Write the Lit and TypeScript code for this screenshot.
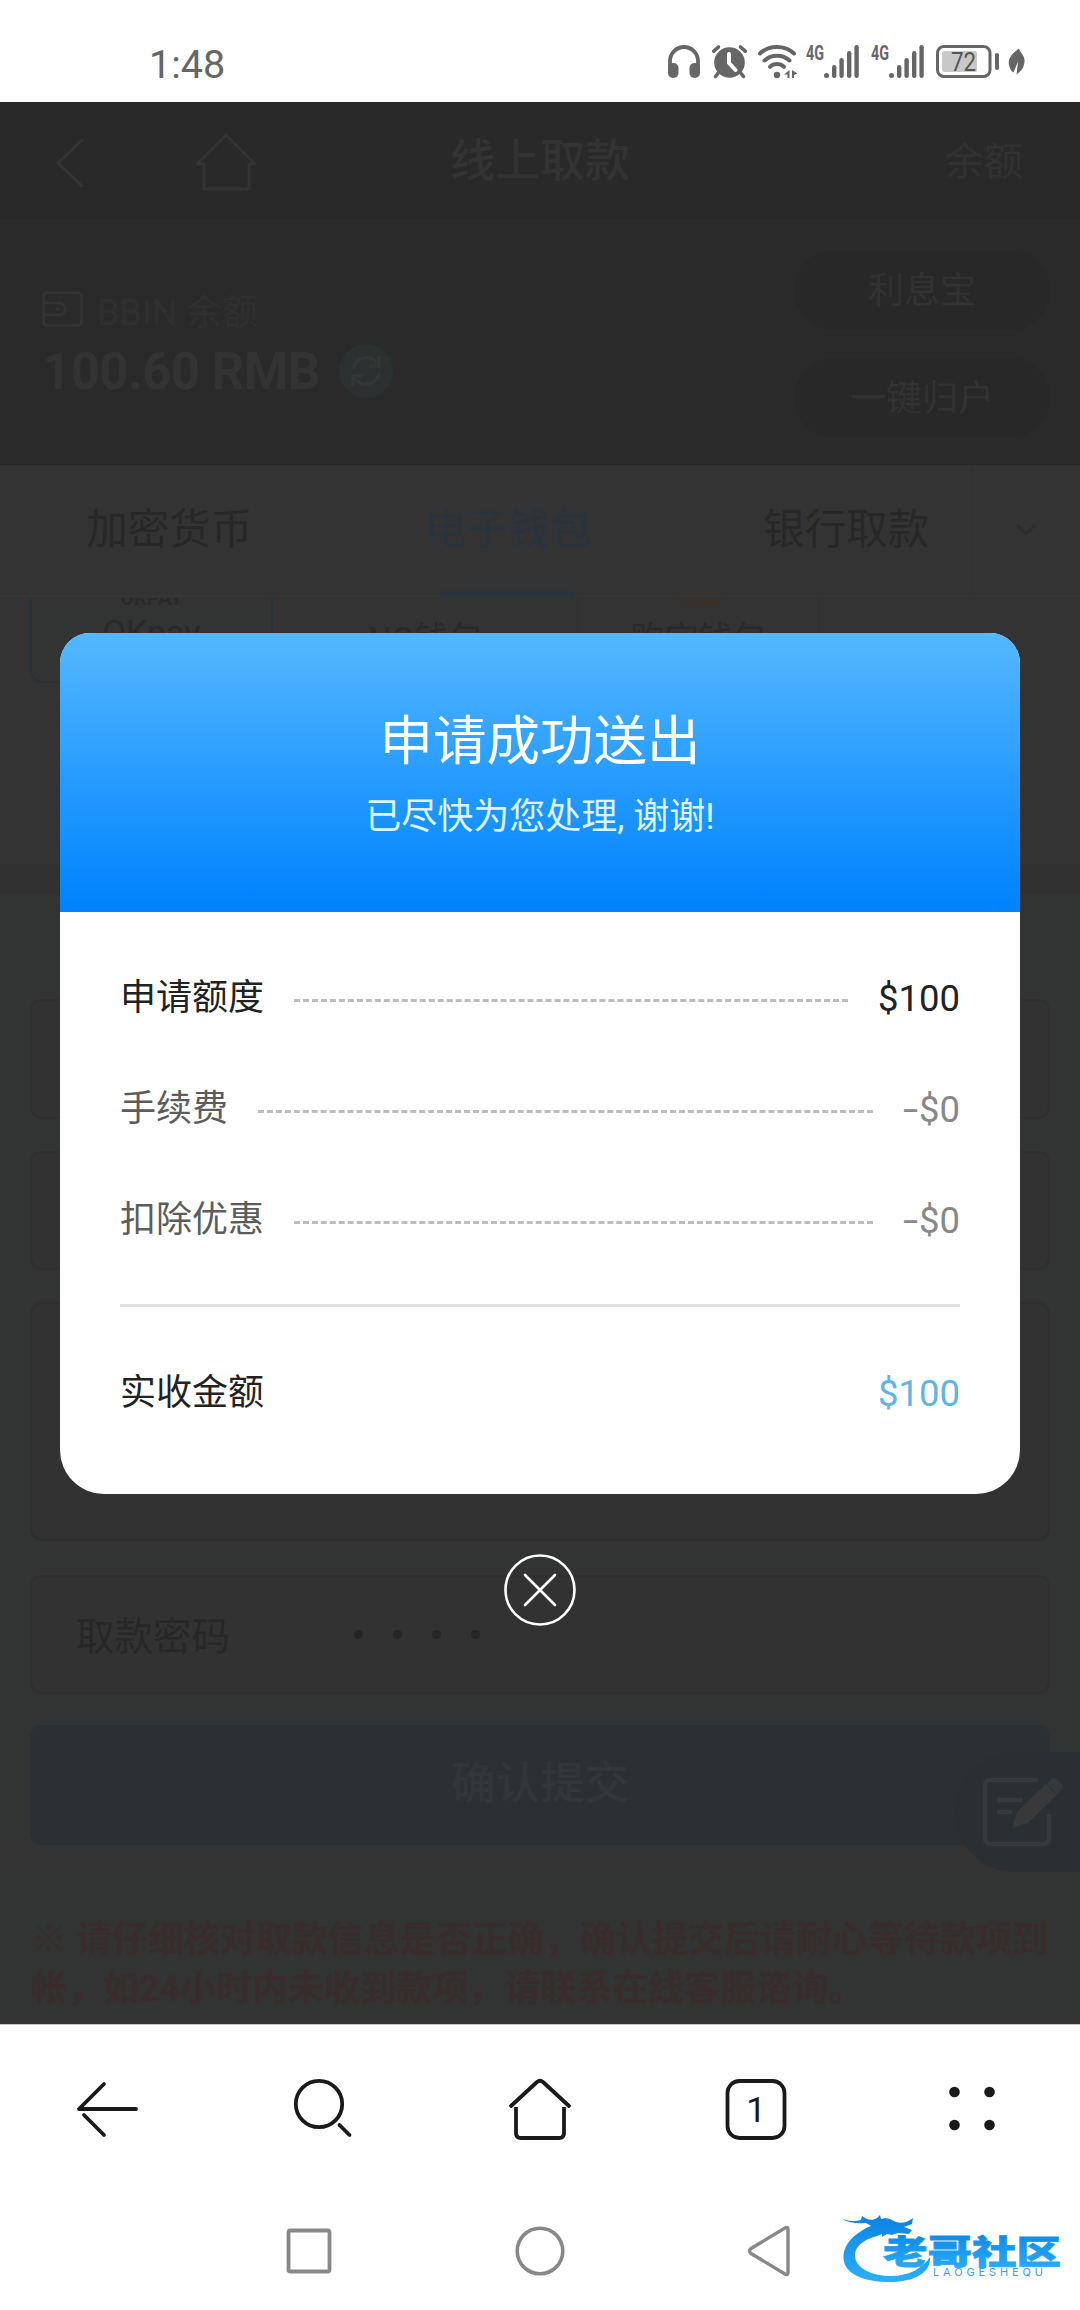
import { LitElement, html, css, svg } from "lit";
import { customElement } from "lit/decorators.js";

const FONT = css`Roboto, "Noto Sans CJK SC", sans-serif`;

interface Row {
  label: string;
  value: string;
  negative: boolean;
}

@customElement("status-bar")
class StatusBar extends LitElement {
  static styles = css`
    :host { display: flex; height: 102px; background: #fff; font-family: ${FONT}; color: #666; box-sizing: border-box; padding: 0 55px 0 149px; justify-content: space-between; }
    .time { font-size: 39.5px; line-height: 129px; }
    .icons { display: flex; height: 34px; margin-top: 45px; }
    .icons svg { display: block; flex: none; overflow: visible; }
    .phones { margin-right: 12px; }
    .alarm { margin-right: 11px; }
    .wifi { margin-right: 8px; }
    .signal { margin-right: 12px; }
    .net { font: 700 20px "Roboto"; fill: #666; }
    .pct { font: 400 25px "Roboto"; fill: #555; }
  `;

  signal() {
    return html`<svg class="signal" width="53" height="34" viewBox="0 0 53 34" fill="#666">
      <text class="net" x="0" y="15" textLength="18" lengthAdjust="spacingAndGlyphs">4G</text>
      <circle cx="20.5" cy="30.6" r="2.5" />
      ${[[26, 20], [33.4, 13], [41, 6], [48.4, 0]].map(
        ([x, y]) => svg`<rect x=${x} y=${y} width="4.4" height=${33 - y} rx="2.2" />`
      )}
    </svg>`;
  }

  render() {
    return html`
      <div class="time">1:48</div>
      <div class="icons">
        <svg class="phones" width="32" height="34" viewBox="0 0 32 34">
          <path d="M2 25V16a14 14 0 0 1 28 0v9" fill="none" stroke="#666" stroke-width="3.8" />
          <rect x="0" y="18" width="10.5" height="15" rx="5" fill="#666" />
          <rect x="21.5" y="18" width="10.5" height="15" rx="5" fill="#666" />
        </svg>
        <svg class="alarm" width="35" height="34" viewBox="0 0 35 34">
          <circle cx="17.5" cy="17.5" r="15.3" fill="#666" />
          <path d="M1.8 6.2 6.5 2M33.2 6.2 28.5 2M7 27l-3.5 4.5M28 27l3.5 4.5" stroke="#666" stroke-width="3.6" stroke-linecap="round" />
          <path d="M17 9v9l6.5 7" fill="none" stroke="#fff" stroke-width="4" stroke-linecap="round" stroke-linejoin="round" />
        </svg>
        <svg class="wifi" width="40" height="34" viewBox="0 0 40 34">
          <g fill="none" stroke="#666" stroke-width="4" stroke-linecap="round">
            <path d="M2 8.5C11-.2 27-.2 36 8.5" />
            <path d="M6.5 15.5c7-6.5 18-6.500 25 0" />
            <path d="M12 21.8c4-3.6 10-3.600 14 0" />
          </g>
          <circle cx="19" cy="30" r="3.2" fill="#666" />
          <path d="M31.500 25v8h-2v-3.500H26zM34 33v-8l5.500 3.500L36 30v3z" fill="#666" />
        </svg>
        ${this.signal()}${this.signal()}
        <svg width="89" height="34" viewBox="0 0 89 34">
          <rect x="1.5" y="1.5" width="52.5" height="30" rx="6.5" fill="none" stroke="#666" stroke-width="3" />
          <rect x="6" y="6" width="35" height="21" rx="2.5" fill="#c8c8c8" />
          <text class="pct" x="15" y="26" textLength="25" lengthAdjust="spacingAndGlyphs">72</text>
          <rect x="59" y="8" width="4" height="17" rx="2" fill="#666" />
          <path d="M83 3.500c1 4 6 7 5.500 13-.5 7-4 10-8 13l1.500-13-4.500 11-2-1.500C69 16 75 9 83 3.500z" fill="#666" />
        </svg>
      </div>
    `;
  }
}

@customElement("withdraw-page")
class WithdrawPage extends LitElement {
  static styles = css`
    :host { display: flex; flex-direction: column; height: 1922px; position: relative; overflow: hidden; background: #333; font-family: ${FONT}; color: #272727; }
    svg { display: block; flex: none; }
    .head { display: grid; grid-template-columns: 450px 1fr auto; height: 120px; box-sizing: border-box; background: #292929; color: #333; padding-right: 57px; border-bottom: 2px solid #2c2c2c; line-height: 120px; white-space: nowrap; }
    .left { display: flex; padding: 30px 0 0 55px; gap: 110px; }
    .title { font-size: 45px; font-weight: 500; }
    .link { font-size: 39px; color: #313131; }
    .balance { display: flex; justify-content: space-between; height: 243px; box-sizing: border-box; background: #2a2a2a; color: #333; padding: 28px 30px 0 42px; }
    .sum { display: flex; flex-direction: column; padding-top: 34px; }
    .bbin { display: flex; align-items: center; gap: 14px; height: 50px; font-size: 36px; color: #2f2f2f; }
    .amount { display: flex; align-items: center; gap: 19px; height: 60px; margin-top: 7px; font-size: 51px; letter-spacing: -0.6px; font-weight: 700; }
    .pills { display: flex; flex-direction: column; gap: 28px; }
    .pill { width: 256px; height: 80px; line-height: 82px; border-radius: 40px; background: #282828; text-align: center; font-size: 36px; color: #323232; }
    .tabs { display: flex; height: 132px; flex: none; font-size: 41.5px; line-height: 130px; border-bottom: 2px solid #353535; box-sizing: border-box; }
    .tab { flex: 0 0 338.5px; display: flex; flex-direction: column; align-items: center; height: 132px; }
    .tab.active { color: #29333e; }
    .tab.active::after { content: ""; width: 135px; height: 7px; margin-top: -4px; background: #2a333b; }
    .more { flex: 1; display: flex; justify-content: center; align-items: center; margin-left: -44px; border-left: 1px solid #313131; }
    .wallets { display: flex; height: 88px; padding-left: 30px; flex: none; margin-top: 1px; font-size: 34px; color: #292929; }
    .wallet { box-sizing: border-box; width: 243px; border: 2px solid #313131; border-top: 0; border-radius: 0 0 12px 12px; display: flex; flex-direction: column; align-items: center; height: 85px; overflow: hidden; }
    .wallet:nth-child(2) { width: 306px; border-left: 0; }
    .wallet:nth-child(3) { width: 241px; border-left: 0; }
    .wallet.on { border-color: #293238; background: #323333; }
    .brand { height: 14px; line-height: 0; font-size: 20px; font-weight: 700; }
    .coin { width: 46px; height: 9px; margin-bottom: 5px; border-radius: 0 0 24px 24px; background: #38302b; }
    .band { height: 30px; margin-top: 178px; flex: none; background: #313131; }
    .form { display: flex; flex-direction: column; padding: 105px 30px 0; flex: none; background: #323333; }
    .box { box-sizing: border-box; border: 2px solid #2f2f2f; border-radius: 12px; height: 119px; background: #323232; font-size: 38.5px; line-height: 119px; padding: 0 44px; display: flex; }
    .box.note { height: 120px; margin-bottom: 32px; }
    .box.tall { height: 239px; margin: 32px 0 34px; padding-top: 114px; font-size: 35px; color: #2c2c2c; }
    .blue { color: #29323a; }
    .dots { display: flex; gap: 30px; padding: 53px 0 0 124px; }
    .dot { width: 9px; height: 9px; border-radius: 50%; background: #252525; }
    .submit { height: 120px; line-height: 119px; margin-top: 31px; border-radius: 12px; background: #2b3034; color: #333639; font-size: 44.5px; text-align: center; font-weight: 500; }
    .warn { flex: 1; background: #313432; margin-top: 27px; padding: 44px 0 0 31px; font-size: 36px; line-height: 49px; font-weight: 700; color: #382c2c; white-space: nowrap; }
    .fab { position: absolute; right: 0; bottom: 152px; width: 125px; height: 120px; background: #2a2f33; border-radius: 60px 0 0 60px; }
    .fab svg { margin: 22px 0 0 27px; }
  `;

  render() {
    return html`
      <div class="head">
        <div class="left">
          <svg width="31" height="60" viewBox="0 0 31 60"><path d="M28 7 3 31l25 24" fill="none" stroke="#343434" stroke-width="3" /></svg>
          <svg width="60" height="60" viewBox="0 0 60 60"><path d="M1 32 30 3l29 29H53V57H8V32z" fill="none" stroke="#333" stroke-width="3" /></svg>
        </div>
        <div class="title">线上取款</div>
        <div class="link">余额</div>
      </div>
      <div class="balance">
        <div class="sum">
          <div class="bbin">
            <svg width="41" height="36" viewBox="0 0 41 36">
              <rect x="1.5" y="1.5" width="38" height="33" rx="4" fill="none" stroke="#343434" stroke-width="2.6" />
              <path d="M2 12h15a6 6 0 0 1 0 12H2" fill="none" stroke="#343434" stroke-width="2.6" />
              <circle cx="15" cy="18" r="1.8" fill="#343434" />
            </svg>
            <span>BBIN 余额</span>
          </div>
          <div class="amount">
            <span>100.60 RMB</span>
            <svg width="54" height="54" viewBox="0 0 54 54">
              <circle cx="27" cy="27" r="27" fill="#2c3030" />
              <g fill="none" stroke="#343636" stroke-width="3.5">
                <path d="M14 25a13.500 13.500 0 0 1 24-6M40 29a13.500 13.500 0 0 1-24 6" />
                <path d="M40 12v10H30M14 42V32h10" />
              </g>
            </svg>
          </div>
        </div>
        <div class="pills">
          <div class="pill">利息宝</div>
          <div class="pill">一键归户</div>
        </div>
      </div>
      <div class="tabs">
        <div class="tab">加密货币</div>
        <div class="tab active">电子钱包</div>
        <div class="tab">银行取款</div>
        <div class="more"><svg width="20" height="12" viewBox="0 0 20 12"><path d="M1 1l9 9 9-9" fill="none" stroke="#2d2d2d" stroke-width="2.5" /></svg></div>
      </div>
      <div class="wallets">
        <div class="wallet on"><div class="brand">OKPAY</div>OKpay</div>
        <div class="wallet"><div class="brand"></div>NG钱包</div>
        <div class="wallet"><div class="coin"></div>购宝钱包</div>
      </div>
      <div class="band"></div>
      <div class="form">
        <div class="box note"></div>
        <div class="box"></div>
        <div class="box tall"><span class="blue">什么</span><span>是信用账户</span></div>
        <div class="box">
          <span>取款密码</span>
          <div class="dots">${[0, 1, 2, 3].map(() => html`<span class="dot"></span>`)}</div>
        </div>
        <div class="submit">确认提交</div>
      </div>
      <div class="warn">※ 请仔细核对取款信息是否正确，确认提交后请耐心等待款项到<br />帐，如24小时内未收到款项，请联系在线客服谘询。</div>
      <div class="fab">
        <svg width="82" height="76" viewBox="0 0 82 76">
          <path d="M56 6H8a5 5 0 0 0-5 5v54a5 5 0 0 0 5 5h54a5 5 0 0 0 5-5V40" fill="none" stroke="#373a3c" stroke-width="4.5" />
          <path d="M15 26h26M15 38h15" stroke="#373a3c" stroke-width="4.5" />
          <path d="M30 54l5-16 30-29 11 11-30 29z" fill="#393939" />
          <path d="M64 10l5-5q3-3 6 0l5 5q3 3 0 6l-5 5z" fill="#34383a" stroke="#2a2f33" />
        </svg>
      </div>
    `;
  }
}

@customElement("result-dialog")
class ResultDialog extends LitElement {
  static styles = css`
    :host { display: flex; flex-direction: column; align-items: center; width: 960px; font-family: ${FONT}; }
    .card { width: 960px; height: 861px; border-radius: 30px 30px 44px 44px; overflow: hidden; background: #fff; }
    .top { height: 279px; box-sizing: border-box; padding-top: 69px; text-align: center; background: linear-gradient(#54b8ff, #0083ff 97%); }
    .title { font-size: 53.5px; line-height: 80px; font-weight: 400; color: #fff; }
    .sub { font-size: 36px; line-height: 54px; margin-top: 8px; color: #dcf3ff; }
    .body { padding: 31px 60px 0; font-size: 36px; }
    .row { display: flex; align-items: center; height: 111px; line-height: 111px; color: #222; white-space: nowrap; }
    .dash { flex: 1; height: 0; border-top: 3px dashed #bcbcbc; margin: 3px 30px 0; }
    .val { font-size: 36.5px; }
    .minus { display: inline-block; width: 16px; transform: scaleX(1.5); transform-origin: left; }
    .muted { color: #5c5c5c; }
    .muted .val { color: #888; }
    .rule { height: 3px; background: #dfdfdf; margin: 28px 0 31px; }
    .total { justify-content: space-between; }
    .blue { color: #5fb4e8; }
    .close { display: block; margin-top: 60px; }
  `;

  rows: Row[] = [
    { label: "申请额度", value: "$100", negative: false },
    { label: "手续费", value: "$0", negative: true },
    { label: "扣除优惠", value: "$0", negative: true },
  ];

  render() {
    return html`
      <div class="card">
        <div class="top">
          <div class="title">申请成功送出</div>
          <div class="sub">已尽快为您处理, 谢谢!</div>
        </div>
        <div class="body">
          ${this.rows.map(
            (r) => html`<div class="row ${r.negative ? "muted" : ""}"><span>${r.label}</span><i class="dash"></i><span class="val">${r.negative ? html`<span class="minus">-</span>` : ""}${r.value}</span></div>`
          )}
          <div class="rule"></div>
          <div class="row total"><span>实收金额</span><span class="val blue">$100</span></div>
        </div>
      </div>
      <svg class="close" width="72" height="72" viewBox="0 0 72 72" fill="none" stroke="#fff" stroke-width="2.6">
        <circle cx="36" cy="36" r="34.5" />
        <path d="M21 21l30 30M51 21 21 51" stroke-linecap="round" />
      </svg>
    `;
  }
}

@customElement("browser-bar")
class BrowserBar extends LitElement {
  static styles = css`
    :host { display: grid; grid-template-columns: repeat(5, 216px); height: 172px; box-sizing: border-box; border-top: 1px solid #c4c4c4; background: #fff; justify-items: center; align-items: center; padding-bottom: 3px; }
    svg { display: block; }
    .n { font: 400 35px "Roboto"; fill: #1a1a1a; }
  `;

  render() {
    return html`
      <svg width="64" height="64" viewBox="0 0 64 64" fill="none" stroke="#1a1a1a" stroke-width="3.8" stroke-linecap="round" stroke-linejoin="round"><path d="M60 32H3L28 7M8 38l20 20" /></svg>
      <svg width="64" height="64" viewBox="0 0 64 64" fill="none" stroke="#1a1a1a" stroke-width="3.8" stroke-linecap="round"><circle cx="27" cy="27" r="23.2" /><path d="M47.500 48l10 10" /></svg>
      <svg width="64" height="64" viewBox="0 0 64 64" fill="none" stroke="#1a1a1a" stroke-width="3.8" stroke-linecap="round" stroke-linejoin="round"><path d="M3 29 29 5q3-2.500 6 0l26 24" /><path d="M8 30v26q0 5 5 5h38q5 0 5-5V30" stroke-linecap="butt" /></svg>
      <svg width="64" height="64" viewBox="0 0 64 64"><rect x="3.500" y="4" width="57" height="57" rx="12" fill="none" stroke="#1a1a1a" stroke-width="3.8" /><text class="n" x="32" y="45" text-anchor="middle">1</text></svg>
      <svg width="64" height="64" viewBox="0 0 64 64" fill="#1a1a1a"><circle cx="14.500" cy="15" r="5.3" /><circle cx="49.500" cy="15" r="5.3" /><circle cx="14.500" cy="48" r="5.3" /><circle cx="49.500" cy="48" r="5.3" /></svg>
    `;
  }
}

@customElement("system-nav")
class SystemNav extends LitElement {
  static styles = css`
    :host { display: flex; height: 114px; background: #fff; box-sizing: border-box; padding: 28px 0 0 284px; position: relative; }
    svg { display: block; flex: none; }
    .keys { display: flex; gap: 180px; }
    .mark { position: absolute; right: 15px; top: 10px; }
    .cn { font: 900 33px "Noto Sans CJK SC"; fill: url(#ink); stroke: url(#ink); stroke-width: 0.8; }
    .en { font: 400 11px "Inter", sans-serif; fill: #3d9fe0; }
  `;

  render() {
    return html`
      <div class="keys">
        <svg width="51" height="54" viewBox="0 0 51 54"><rect x="4.500" y="6.500" width="41" height="41" rx="2" fill="none" stroke="#888" stroke-width="3.8" /></svg>
        <svg width="51" height="54" viewBox="0 0 51 54"><circle cx="25" cy="27" r="22.8" fill="none" stroke="#888" stroke-width="3.6" /></svg>
        <svg width="51" height="54" viewBox="0 0 51 54"><path d="M42 5.500v43q0 3-3 1.500L5 29.500q-3-2.500 0-5L39 4q3-1.500 3 1.500z" fill="none" stroke="#888" stroke-width="3.4" stroke-linejoin="round" /></svg>
      </div>
      <svg class="mark" width="225" height="84" viewBox="0 0 225 84">
        <defs><linearGradient id="ink" x1="0" y1="0" x2="0" y2="1"><stop offset="0" stop-color="#0a82e0" /><stop offset="1" stop-color="#2cb0fb" /></linearGradient></defs>
        <path fill="url(#ink)" d="M2 13c7 2 13 3 19 1l1-4c5 4 10 5 15 2l3-3 1 4c4-1 6-1 9 0l6 3c6 2 12 0 17-4l-1 6-8 3 8 3-3 4-11-1-6 2-5-1-5 3v-3l-8 3C24 34 15 40 15 49c0 14 18 21 36 21 18 0 32-8 39-19 1 16-16 25-40 25C24 76 4 68 3.500 52 3 39 14 27 31 20l-5-3c-8 1-17 0-24-4z" />
        <text class="cn" x="43" y="57.5" textLength="178" lengthAdjust="spacingAndGlyphs">老哥社区</text>
        <text class="en" x="93" y="70" textLength="110" lengthAdjust="spacing">LAOGESHEQU</text>
      </svg>
    `;
  }
}

@customElement("app-root")
class AppRoot extends LitElement {
  static styles = css`
    :host { display: flex; flex-direction: column; width: 1080px; height: 2310px; position: relative; overflow: hidden; background: #fff; }
    .dialog { position: absolute; left: 60px; top: 633px; }
  `;

  render() {
    return html`
      <status-bar></status-bar>
      <withdraw-page></withdraw-page>
      <result-dialog class="dialog"></result-dialog>
      <browser-bar></browser-bar>
      <system-nav></system-nav>
    `;
  }
}
